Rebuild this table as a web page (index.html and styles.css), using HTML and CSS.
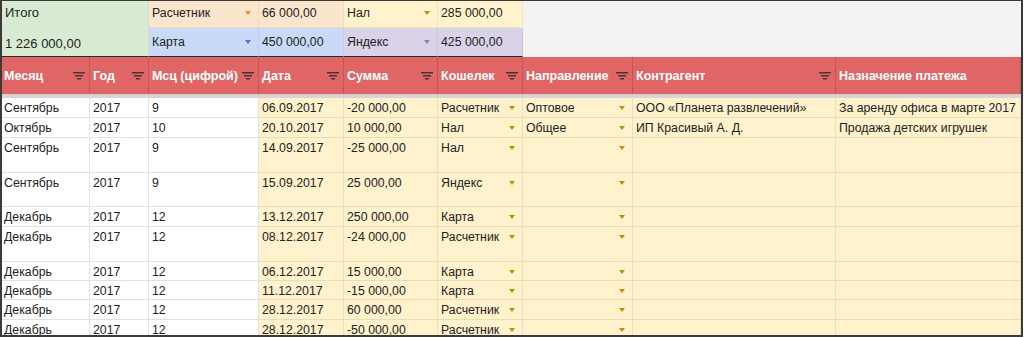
FILE: index.html
```html
<!DOCTYPE html>
<html lang="ru">
<head>
<meta charset="utf-8">
<title>Таблица</title>
<link rel="stylesheet" href="styles.css">
</head>
<body>
<div class="frame">
  <div class="summary">
    <div class="s-cell s-green s-total">
      <div class="s-line">Итого</div>
      <div class="s-line s-line2">1 226 000,00</div>
    </div>
    <div class="s-cell s-orange drop"><span>Расчетник</span><i class="arrow a-orange"></i></div>
    <div class="s-cell s-orange">66 000,00</div>
    <div class="s-cell s-yellow drop"><span>Нал</span><i class="arrow a-gold"></i></div>
    <div class="s-cell s-yellow">285 000,00</div>
    <div class="s-cell s-gray"></div>
    <div class="s-cell s-blue drop r2"><span>Карта</span><i class="arrow a-blue"></i></div>
    <div class="s-cell s-blue r2">450 000,00</div>
    <div class="s-cell s-purple drop r2"><span>Яндекс</span><i class="arrow a-purple"></i></div>
    <div class="s-cell s-purple r2">425 000,00</div>
  </div>

  <div class="grid head">
    <div class="h-cell"><span>Месяц</span><i class="filter"></i></div>
    <div class="h-cell"><span>Год</span><i class="filter"></i></div>
    <div class="h-cell"><span>Мсц (цифрой)</span><i class="filter"></i></div>
    <div class="h-cell"><span>Дата</span><i class="filter"></i></div>
    <div class="h-cell"><span>Сумма</span><i class="filter"></i></div>
    <div class="h-cell"><span>Кошелек</span><i class="filter"></i></div>
    <div class="h-cell"><span>Направление</span><i class="filter"></i></div>
    <div class="h-cell"><span>Контрагент</span><i class="filter"></i></div>
    <div class="h-cell"><span>Назначение платежа</span></div>
  </div>
  <div class="freeze"></div>

  <div class="grid row h20">
    <div class="c w">Сентябрь</div><div class="c w">2017</div><div class="c w">9</div>
    <div class="c y">06.09.2017</div><div class="c y">-20 000,00</div>
    <div class="c y drop"><span>Расчетник</span><i class="arrow a-gold"></i></div>
    <div class="c y drop"><span>Оптовое</span><i class="arrow a-gold"></i></div>
    <div class="c y">ООО «Планета развлечений»</div><div class="c y">За аренду офиса в марте 2017</div>
  </div>
  <div class="grid row h20">
    <div class="c w">Октябрь</div><div class="c w">2017</div><div class="c w">10</div>
    <div class="c y">20.10.2017</div><div class="c y">10 000,00</div>
    <div class="c y drop"><span>Нал</span><i class="arrow a-gold"></i></div>
    <div class="c y drop"><span>Общее</span><i class="arrow a-gold"></i></div>
    <div class="c y">ИП Красивый А. Д.</div><div class="c y">Продажа детских игрушек</div>
  </div>
  <div class="grid row h35">
    <div class="c w">Сентябрь</div><div class="c w">2017</div><div class="c w">9</div>
    <div class="c y">14.09.2017</div><div class="c y">-25 000,00</div>
    <div class="c y drop"><span>Нал</span><i class="arrow a-gold"></i></div>
    <div class="c y drop"><span></span><i class="arrow a-gold"></i></div>
    <div class="c y"></div><div class="c y"></div>
  </div>
  <div class="grid row h34">
    <div class="c w">Сентябрь</div><div class="c w">2017</div><div class="c w">9</div>
    <div class="c y">15.09.2017</div><div class="c y">25 000,00</div>
    <div class="c y drop"><span>Яндекс</span><i class="arrow a-gold"></i></div>
    <div class="c y drop"><span></span><i class="arrow a-gold"></i></div>
    <div class="c y"></div><div class="c y"></div>
  </div>
  <div class="grid row h20">
    <div class="c w">Декабрь</div><div class="c w">2017</div><div class="c w">12</div>
    <div class="c y">13.12.2017</div><div class="c y">250 000,00</div>
    <div class="c y drop"><span>Карта</span><i class="arrow a-gold"></i></div>
    <div class="c y drop"><span></span><i class="arrow a-gold"></i></div>
    <div class="c y"></div><div class="c y"></div>
  </div>
  <div class="grid row h35">
    <div class="c w">Декабрь</div><div class="c w">2017</div><div class="c w">12</div>
    <div class="c y">08.12.2017</div><div class="c y">-24 000,00</div>
    <div class="c y drop"><span>Расчетник</span><i class="arrow a-gold"></i></div>
    <div class="c y drop"><span></span><i class="arrow a-gold"></i></div>
    <div class="c y"></div><div class="c y"></div>
  </div>
  <div class="grid row h19">
    <div class="c w">Декабрь</div><div class="c w">2017</div><div class="c w">12</div>
    <div class="c y">06.12.2017</div><div class="c y">15 000,00</div>
    <div class="c y drop"><span>Карта</span><i class="arrow a-gold"></i></div>
    <div class="c y drop"><span></span><i class="arrow a-gold"></i></div>
    <div class="c y"></div><div class="c y"></div>
  </div>
  <div class="grid row h19">
    <div class="c w">Декабрь</div><div class="c w">2017</div><div class="c w">12</div>
    <div class="c y">11.12.2017</div><div class="c y">-15 000,00</div>
    <div class="c y drop"><span>Карта</span><i class="arrow a-gold"></i></div>
    <div class="c y drop"><span></span><i class="arrow a-gold"></i></div>
    <div class="c y"></div><div class="c y"></div>
  </div>
  <div class="grid row h20">
    <div class="c w">Декабрь</div><div class="c w">2017</div><div class="c w">12</div>
    <div class="c y">28.12.2017</div><div class="c y">60 000,00</div>
    <div class="c y drop"><span>Расчетник</span><i class="arrow a-gold"></i></div>
    <div class="c y drop"><span></span><i class="arrow a-gold"></i></div>
    <div class="c y"></div><div class="c y"></div>
  </div>
  <div class="grid row h20">
    <div class="c w">Декабрь</div><div class="c w">2017</div><div class="c w">12</div>
    <div class="c y">28.12.2017</div><div class="c y">-50 000,00</div>
    <div class="c y drop"><span>Расчетник</span><i class="arrow a-gold"></i></div>
    <div class="c y drop"><span></span><i class="arrow a-gold"></i></div>
    <div class="c y"></div><div class="c y"></div>
  </div>
</div>
</body>
</html>
```

FILE: styles.css
```css
* { box-sizing: border-box; }

html, body {
  margin: 0;
  padding: 0;
  background: #ffffff;
}

body {
  font-family: "Liberation Sans", Arial, sans-serif;
  font-size: 12.3px;
  color: #222222;
}

.frame {
  width: 1023px;
  height: 337px;
  border-top: 1px solid #3a3a3a;
  border-left: 2px solid #3a3a3a;
  border-right: 2px solid #3a3a3a;
  border-bottom: 2px solid #3a3a3a;
  overflow: hidden;
  background: #fff2cc;
}

/* ---------- summary block ---------- */
.summary {
  display: grid;
  grid-template-columns: 147px 110px 85px 94px 85px 498px;
  grid-template-rows: 27px 29px;
  height: 56px;
}

.s-cell {
  display: flex;
  align-items: flex-start;
  padding: 4px 3px 0 3px;
  line-height: 16px;
  white-space: nowrap;
  border-right: 1px solid rgba(0, 0, 0, 0.05);
  border-bottom: 1px solid rgba(0, 0, 0, 0.06);
}

.s-cell.r2 {
  border-bottom: 1px solid #2a2a2a;
  padding-top: 6px;
}

.s-total {
  grid-row: 1 / span 2;
  flex-direction: column;
  padding: 4px 3px 0 3px;
  border-bottom: 1px solid #2a2a2a;
  border-right: 1px solid rgba(0, 0, 0, 0.06);
  font-size: 13px;
}

.s-line2 {
  margin-top: 15px;
}

.s-gray {
  grid-row: 1 / span 2;
  grid-column: 6;
  background: #f3f3f3;
  border: 0;
}

.s-green { background: #d9ead3; }
.s-orange { background: #fce5cd; }
.s-yellow { background: #fff2cc; }
.s-blue { background: #c9daf8; }
.s-purple { background: #d9d2e9; }

/* ---------- dropdown ---------- */
.drop {
  display: flex;
  align-items: flex-start;
  justify-content: space-between;
}

.arrow {
  flex: none;
  width: 0;
  height: 0;
  margin: 6px 4px 0 0;
  border-left: 3.5px solid transparent;
  border-right: 3.5px solid transparent;
  border-top: 4px solid #bf9000;
}

.a-orange { border-top-color: #e69138; }
.a-gold { border-top-color: #bf9000; }
.a-blue { border-top-color: #3c78d8; }
.a-purple { border-top-color: #8e7cc3; }

/* ---------- table grid ---------- */
.grid {
  display: grid;
  grid-template-columns: 88px 59px 110px 85px 94px 85px 110px 203px 185px;
}

.head {
  height: 37px;
  background: #e06666;
}

.h-cell {
  display: flex;
  align-items: center;
  justify-content: space-between;
  padding: 0 3px 0 3px;
  color: #ffffff;
  font-weight: bold;
  font-size: 12.5px;
  white-space: nowrap;
  border-right: 1px solid rgba(120, 30, 30, 0.25);
}

.h-cell:first-child {
  padding-left: 2px;
}

.filter {
  flex: none;
  width: 12px;
  height: 8px;
  margin-right: 1px;
  background:
    linear-gradient(#4a3434, #4a3434) center 0 / 12px 1.5px no-repeat,
    linear-gradient(#4a3434, #4a3434) center 3px / 8px 1.5px no-repeat,
    linear-gradient(#4a3434, #4a3434) center 6px / 4px 1.5px no-repeat;
}

.freeze {
  height: 4px;
  background: #d6d6d6;
  border-top: 1px solid #cfcfcf;
}

.row .c {
  padding: 2px 3px 0 3px;
  line-height: 16px;
  white-space: nowrap;
  overflow: hidden;
}

.row .c.w {
  background: #ffffff;
  border-right: 1px solid #e2e2e2;
  border-bottom: 1px solid #e2e2e2;
}

.row .c.w:first-child {
  padding-left: 2px;
}

.row .c.y {
  background: #fff2cc;
  border-right: 1px solid #ebdfba;
  border-bottom: 1px solid #e9ddb8;
}

.h20 { height: 20px; }
.h19 { height: 19px; }
.h34 { height: 34px; }
.h35 { height: 35px; }
```
